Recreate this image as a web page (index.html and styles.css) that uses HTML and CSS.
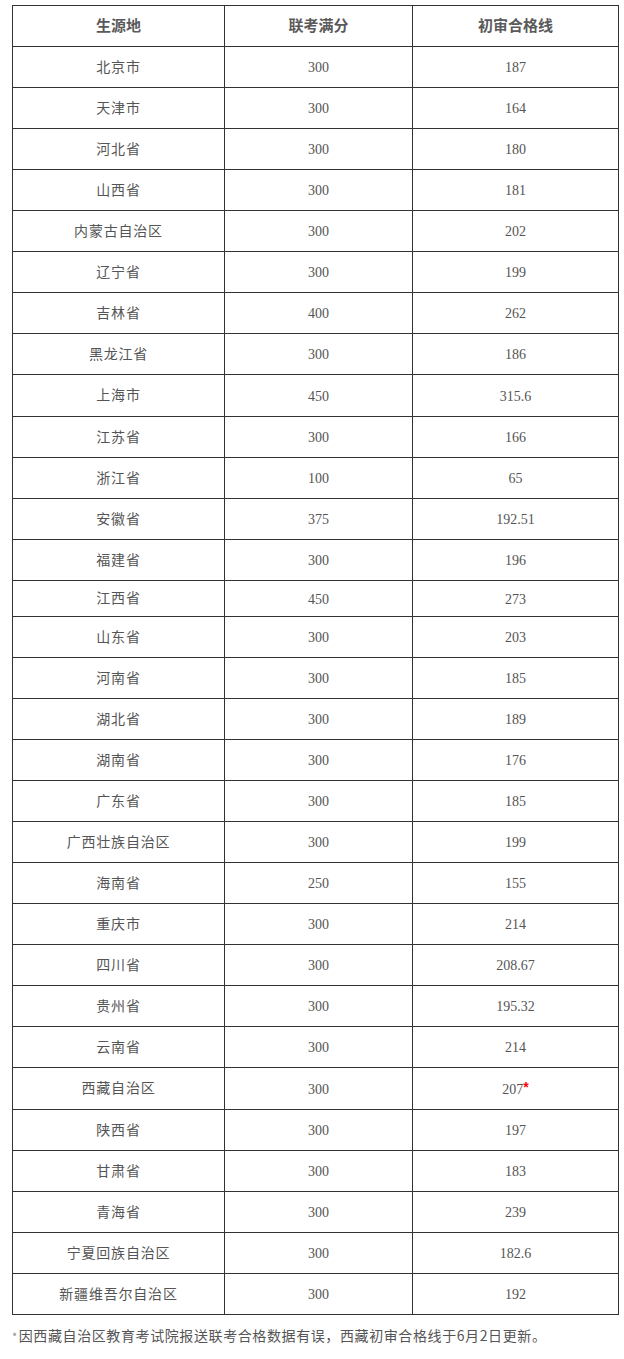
FILE: index.html
```html
<!DOCTYPE html>
<html lang="zh-CN">
<head>
<meta charset="utf-8">
<title>初审合格线</title>
<link rel="stylesheet" href="styles.css">
</head>
<body>
<div class="page">
  <table class="scores">
    <colgroup>
      <col class="c1"><col class="c2"><col class="c3">
    </colgroup>
    <thead>
      <tr><th>生源地</th><th>联考满分</th><th>初审合格线</th></tr>
    </thead>
    <tbody>
      <tr><td class="name">北京市</td><td>300</td><td>187</td></tr>
      <tr><td class="name">天津市</td><td>300</td><td>164</td></tr>
      <tr><td class="name">河北省</td><td>300</td><td>180</td></tr>
      <tr><td class="name">山西省</td><td>300</td><td>181</td></tr>
      <tr><td class="name">内蒙古自治区</td><td>300</td><td>202</td></tr>
      <tr><td class="name">辽宁省</td><td>300</td><td>199</td></tr>
      <tr><td class="name">吉林省</td><td>400</td><td>262</td></tr>
      <tr><td class="name">黑龙江省</td><td>300</td><td>186</td></tr>
      <tr class="tall"><td class="name">上海市</td><td>450</td><td>315.6</td></tr>
      <tr><td class="name">江苏省</td><td>300</td><td>166</td></tr>
      <tr><td class="name">浙江省</td><td>100</td><td>65</td></tr>
      <tr><td class="name">安徽省</td><td>375</td><td>192.51</td></tr>
      <tr><td class="name">福建省</td><td>300</td><td>196</td></tr>
      <tr class="short"><td class="name">江西省</td><td>450</td><td>273</td></tr>
      <tr><td class="name">山东省</td><td>300</td><td>203</td></tr>
      <tr><td class="name">河南省</td><td>300</td><td>185</td></tr>
      <tr><td class="name">湖北省</td><td>300</td><td>189</td></tr>
      <tr><td class="name">湖南省</td><td>300</td><td>176</td></tr>
      <tr><td class="name">广东省</td><td>300</td><td>185</td></tr>
      <tr><td class="name">广西壮族自治区</td><td>300</td><td>199</td></tr>
      <tr><td class="name">海南省</td><td>250</td><td>155</td></tr>
      <tr><td class="name">重庆市</td><td>300</td><td>214</td></tr>
      <tr><td class="name">四川省</td><td>300</td><td>208.67</td></tr>
      <tr><td class="name">贵州省</td><td>300</td><td>195.32</td></tr>
      <tr><td class="name">云南省</td><td>300</td><td>214</td></tr>
      <tr class="tall"><td class="name">西藏自治区</td><td>300</td><td>207<span class="mark">*</span></td></tr>
      <tr><td class="name">陕西省</td><td>300</td><td>197</td></tr>
      <tr><td class="name">甘肃省</td><td>300</td><td>183</td></tr>
      <tr><td class="name">青海省</td><td>300</td><td>239</td></tr>
      <tr><td class="name">宁夏回族自治区</td><td>300</td><td>182.6</td></tr>
      <tr><td class="name">新疆维吾尔自治区</td><td>300</td><td>192</td></tr>
    </tbody>
  </table>
  <p class="note"><span class="star">*</span>因西藏自治区教育考试院报送联考合格数据有误，西藏初审合格线于6月2日更新。</p>
</div>
</body>
</html>
```

FILE: styles.css
```css
html, body {
  margin: 0;
  padding: 0;
  background: #fff;
}

.page {
  padding: 5px 6px 0 12px;
  font-family: "Liberation Serif", "Noto Sans CJK SC", serif;
  color: #555;
}

.scores {
  width: 606px;
  border-collapse: collapse;
  table-layout: fixed;
  font-size: 14px;
}

.c1 { width: 212px; }
.c2 { width: 188px; }
.c3 { width: 206px; }

.scores th,
.scores td {
  border: 1px solid #333;
  padding: 2px 0 0;
  height: 41px;
  box-sizing: border-box;
  text-align: center;
  vertical-align: middle;
  line-height: 20px;
}

.scores th {
  font-family: "Noto Sans CJK SC", sans-serif;
  font-size: 15px;
  font-weight: bold;
  color: #5a5a5a;
  padding: 0 0 3px;
}

.scores td.name {
  font-family: "Noto Sans CJK SC", sans-serif;
  font-size: 14px;
  letter-spacing: 0.8px;
  color: #555;
  padding: 0 0 3px;
}

.scores tr.tall td { height: 42px; }
.scores tr.short td { height: 36px; }

.mark {
  color: #f00;
  font-weight: bold;
  font-family: "Liberation Sans", sans-serif;
  position: relative;
  top: -2px;
}

.note {
  margin: 10px 0 0;
  font-family: "Noto Sans CJK SC", sans-serif;
  font-size: 14px;
  letter-spacing: 0.6px;
  line-height: 21px;
  color: #555;
}

.note .star {
  color: #888;
  font-size: 11px;
  margin-right: 1px;
}
```
